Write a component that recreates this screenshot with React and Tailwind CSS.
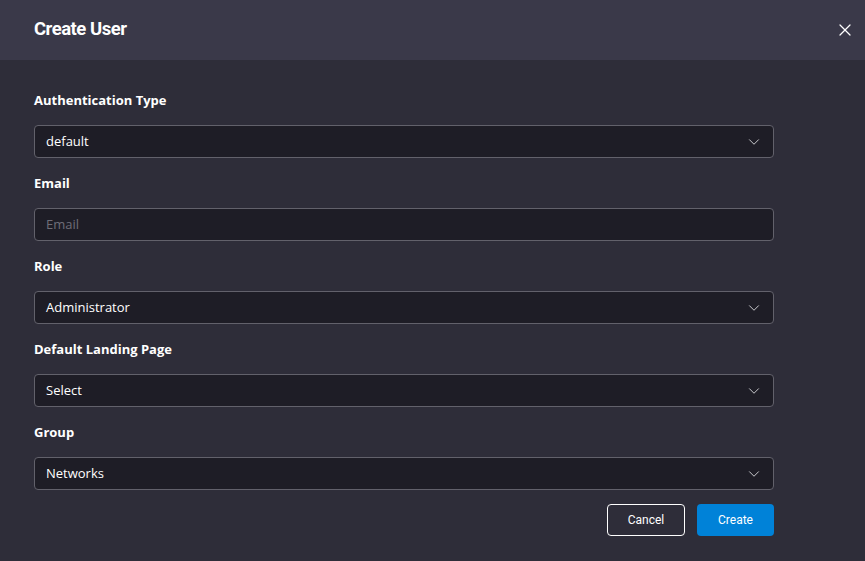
import { X, ChevronDown } from 'lucide-react'

const fields = [
  { label: 'Authentication Type', value: 'default', select: true },
  { label: 'Email', placeholder: 'Email' },
  { label: 'Role', value: 'Administrator', select: true },
  { label: 'Default Landing Page', value: 'Select', select: true },
  { label: 'Group', value: 'Networks', select: true },
]

function Field({ field, first }) {
  return (
    <div className={first ? '' : 'mt-4'}>
      <p className="mb-4 text-[13px] font-bold leading-[18px] text-white">{field.label}</p>
      <div className="flex h-[33px] items-center justify-between rounded border border-[#62616b] bg-[#1e1d26] pl-[11px] pr-[10px]">
        {field.select ? (
          <span className="text-[13px] text-white">{field.value}</span>
        ) : (
          <span className="text-[13px] text-[#6f6e78]">{field.placeholder}</span>
        )}
        {field.select ? <ChevronDown size={18} strokeWidth={1.25} className="text-[#d4d4d8]" /> : null}
      </div>
    </div>
  )
}

export default function App() {
  return (
    <div className="flex h-[561px] w-[865px] flex-col bg-[#2e2d39]" style={{ fontFamily: '"Open Sans", sans-serif' }}>
      <div className="flex h-[60px] shrink-0 items-center justify-between bg-[#3a3949] pl-[34px] pr-[10px]">
        <h1 className="text-[18.5px] font-bold tracking-[-0.5px] text-white" style={{ fontFamily: 'Roboto, sans-serif' }}>
          Create User
        </h1>
        <X size={20} strokeWidth={1.5} className="text-white" />
      </div>
      <div className="w-[774px] pl-[34px] pt-[31px]">
        {fields.map((f, i) => (
          <Field key={f.label} field={f} first={i === 0} />
        ))}
        <div className="mt-[14px] flex justify-end gap-3" style={{ fontFamily: 'Roboto, sans-serif' }}>
          <button className="h-8 w-[78px] rounded border border-white text-xs text-white">Cancel</button>
          <button className="h-8 w-[77px] rounded bg-[#0082d8] text-xs text-white">Create</button>
        </div>
      </div>
    </div>
  )
}
